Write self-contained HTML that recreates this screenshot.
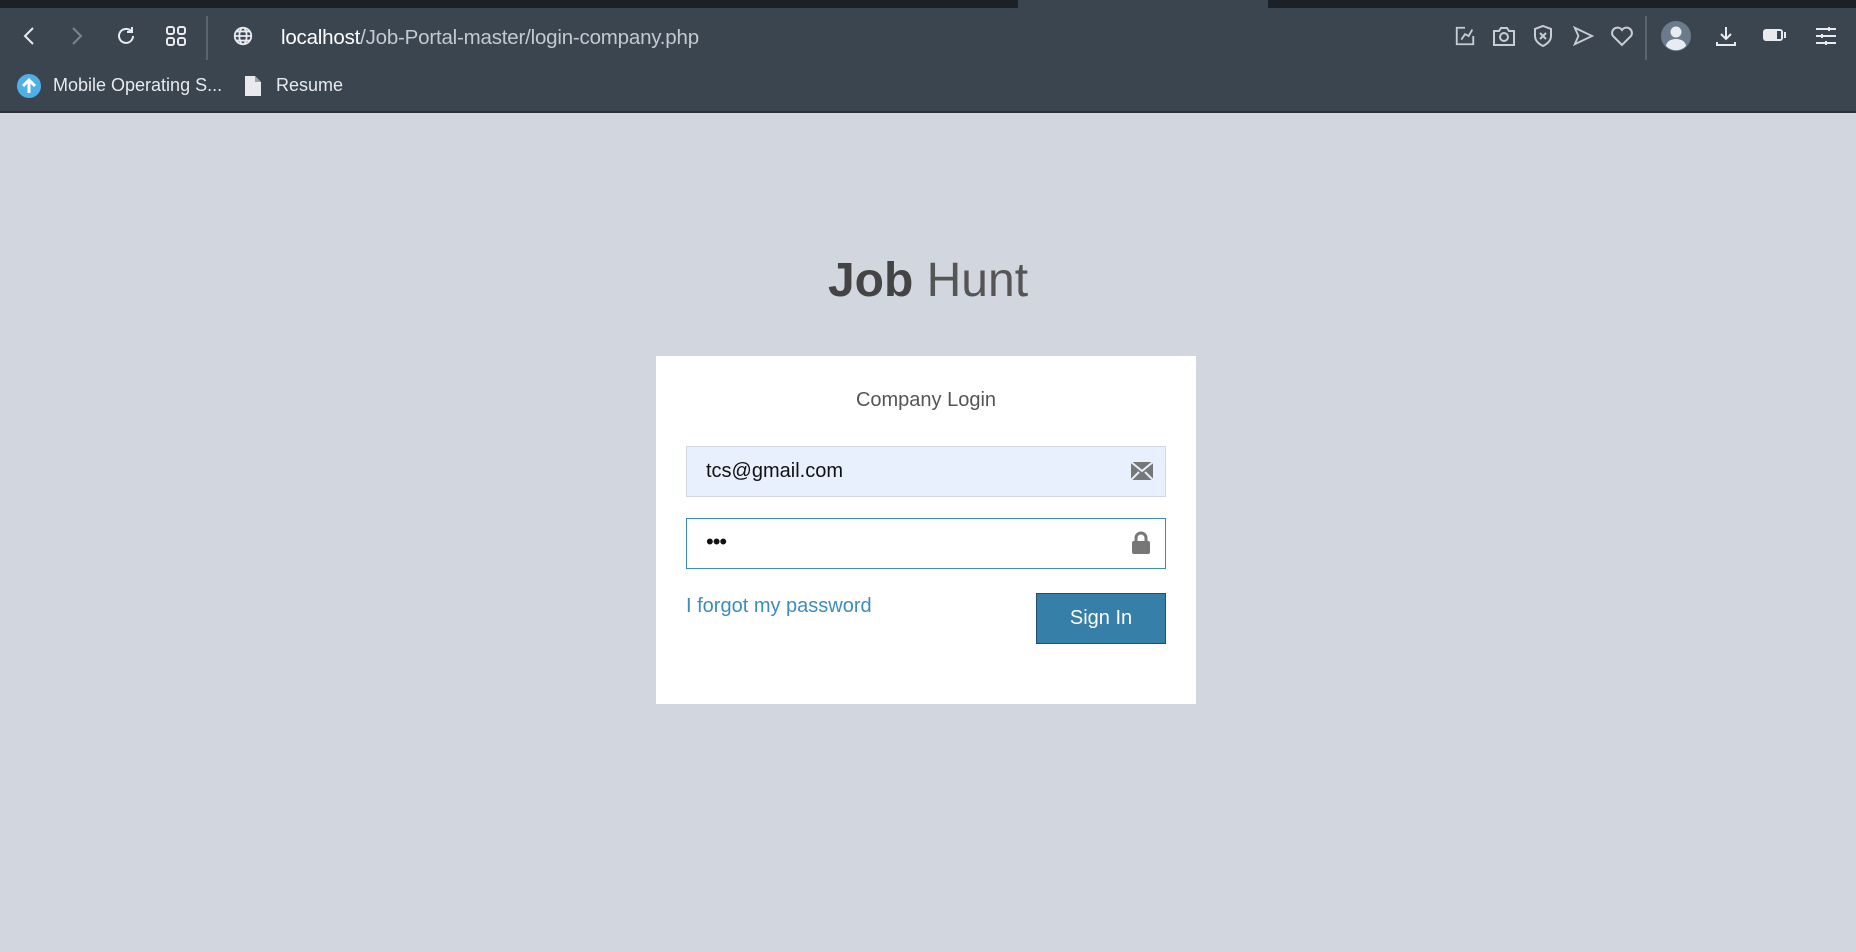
<!DOCTYPE html>
<html><head><meta charset="utf-8"><style>
*{margin:0;padding:0;box-sizing:border-box}
body{width:1856px;height:952px;background:#d2d6de;font-family:"Liberation Sans",sans-serif;position:relative;overflow:hidden}
.top{position:absolute;left:0;top:0;width:1856px;height:8px;background:#1c2127}
.tab{position:absolute;top:0;height:8px;left:1018px;width:250px;background:#3a4550}
.bar{position:absolute;left:0;top:8px;width:1856px;height:105px;background:#3a4550;border-bottom:2px solid #2a3138}
.ic{position:absolute}
.url{position:absolute;left:281px;top:18px;font-size:20.5px;color:#c3c9d0;letter-spacing:-0.2px}
.url b{color:#fff;font-weight:normal}
.bm{position:absolute;top:67px;font-size:18px;color:#e8eaed}
.sep{position:absolute;width:2px;background:#5a646e}
.title{position:absolute;left:0;width:1856px;top:253px;text-align:center;font-size:48px;color:#444}
.card{position:absolute;left:656px;top:356px;width:540px;height:348px;background:#fff}
.h{position:absolute;left:0;width:540px;top:33px;text-align:center;font-size:20px;color:#555}
.in{position:absolute;left:30px;width:480px;height:51px;border:1px solid #d2d6de}
.in span{position:absolute;left:19px;top:13px;font-size:20px;color:#111}
.link{position:absolute;left:30px;top:239px;font-size:20px;color:#3c8dbc}
.btn{position:absolute;left:380px;top:237px;width:130px;height:51px;background:#367fa9;border:1px solid #204d74;color:#fff;font-size:20px;text-align:center;line-height:49px}
</style></head><body>
<div class="top"></div><div class="tab"></div>
<div class="bar">
<svg class="ic" style="left:18px;top:16px" width="24" height="24" viewBox="0 0 24 24" fill="none" stroke="#e8eaed" stroke-width="2"><path d="M15 4l-8 8 8 8"/></svg>
<svg class="ic" style="left:64px;top:16px" width="24" height="24" viewBox="0 0 24 24" fill="none" stroke="#7b858f" stroke-width="2"><path d="M9 4l8 8-8 8"/></svg>
<svg class="ic" style="left:114px;top:16px" width="24" height="24" viewBox="0 0 24 24" fill="none" stroke="#e8eaed" stroke-width="2"><path d="M19 12a7 7 0 1 1-2-5"/><path d="M18 3v5h-5"/></svg>
<svg class="ic" style="left:164px;top:16px" width="24" height="24" viewBox="0 0 24 24" fill="none" stroke="#e8eaed" stroke-width="2"><rect x="3" y="3" width="7" height="7" rx="2"/><rect x="14" y="3" width="7" height="7" rx="2"/><rect x="3" y="14" width="7" height="7" rx="2"/><rect x="14" y="14" width="7" height="7" rx="2"/></svg>
<div class="sep" style="left:206px;top:8px;height:44px"></div>
<svg class="ic" style="left:232px;top:17px" width="22" height="22" viewBox="0 0 24 24" fill="none" stroke="#e8eaed" stroke-width="2"><circle cx="12" cy="12" r="9"/><ellipse cx="12" cy="12" rx="4" ry="9"/><path d="M3 12h18M5 7h14M5 17h14"/></svg>
<div class="url"><b>localhost</b>/Job-Portal-master/login-company.php</div>
<svg class="ic" style="left:1454px;top:17px" width="22" height="22" viewBox="0 0 24 24" fill="none" stroke="#c8cdd3" stroke-width="2"><path d="M12 3H3v18h18v-9"/><path d="M8 16l4-6 4 2 4-7"/></svg>
<svg class="ic" style="left:1492px;top:17px" width="24" height="22" viewBox="0 0 24 22" fill="none" stroke="#c8cdd3" stroke-width="2"><path d="M2 6h5l2-3h6l2 3h5v14H2z"/><circle cx="12" cy="12" r="4"/></svg>
<svg class="ic" style="left:1532px;top:16px" width="22" height="24" viewBox="0 0 22 24" fill="none" stroke="#c8cdd3" stroke-width="2"><path d="M11 2l8 3v7c0 5-4 8-8 10-4-2-8-5-8-10V5z"/><path d="M8 9l6 6M14 9l-6 6"/></svg>
<svg class="ic" style="left:1572px;top:17px" width="22" height="22" viewBox="0 0 24 24" fill="none" stroke="#c8cdd3" stroke-width="2"><path d="M3 3l19 9-19 9 4-9z"/></svg>
<svg class="ic" style="left:1610px;top:17px" width="24" height="22" viewBox="0 0 24 22" fill="none" stroke="#c8cdd3" stroke-width="2"><path d="M12 20L3 11a5 5 0 0 1 9-6 5 5 0 0 1 9 6z"/></svg>
<div class="sep" style="left:1645px;top:8px;height:44px"></div>
<svg class="ic" style="left:1661px;top:13px" width="30" height="30" viewBox="0 0 30 30"><circle cx="15" cy="15" r="15" fill="#6c7b8b"/><circle cx="15" cy="11" r="5.5" fill="#e8ecf0"/><path d="M5 25a10 7 0 0 1 20 0a14 14 0 0 1-20 0z" fill="#e8ecf0"/></svg>
<svg class="ic" style="left:1714px;top:16px" width="24" height="24" viewBox="0 0 24 24" fill="none" stroke="#e8eaed" stroke-width="2"><path d="M12 3v12M7 10l5 5 5-5M3 18v3h18v-3"/></svg>
<svg class="ic" style="left:1762px;top:19px" width="26" height="16" viewBox="0 0 26 16"><rect x="1" y="2" width="20" height="12" rx="3" fill="#e8eaed"/><rect x="15" y="4" width="4" height="8" fill="#3a4550"/><rect x="22" y="5" width="2" height="6" fill="#e8eaed"/></svg>
<svg class="ic" style="left:1814px;top:16px" width="24" height="24" viewBox="0 0 24 24" fill="none" stroke="#e8eaed" stroke-width="2"><path d="M2 5h20M2 12h20M2 19h20M15 3v4M8 10v4M12 17v4"/></svg>
<svg class="ic" style="left:17px;top:66px" width="24" height="24" viewBox="0 0 24 24"><circle cx="12" cy="12" r="12" fill="#4fb0e8"/><path d="M12 19V7M6 12l6-6 6 6" stroke="#fff" stroke-width="3" fill="none"/></svg>
<div class="bm" style="left:53px">Mobile Operating S...</div>
<svg class="ic" style="left:244px;top:67px" width="18" height="22" viewBox="0 0 18 22"><path d="M1 1h10l6 6v14H1z" fill="#e8eaed"/><path d="M11 1v6h6" fill="#9aa2ab"/></svg>
<div class="bm" style="left:276px">Resume</div>
</div>
<div class="title"><b>Job</b> <span style="font-weight:300;color:#555">Hunt</span></div>
<div class="card">
<div class="h">Company Login</div>
<div class="in" style="top:90px;background:#e8f0fe"><span>tcs@gmail.com</span>
<svg style="position:absolute;right:12px;top:15px" width="22" height="18" viewBox="0 0 22 18"><rect x="0" y="0" width="22" height="18" fill="#777"/><path d="M0 0l11 9 11-9M0 18l8-8M22 18l-8-8" stroke="#e8f0fe" stroke-width="2" fill="none"/></svg></div>
<div class="in" style="top:162px;border-color:#3c8dbc;background:#fff"><span style="top:10px;font-size:22px;letter-spacing:-1px">•••</span>
<svg style="position:absolute;right:14px;top:12px" width="20" height="24" viewBox="0 0 20 24"><path d="M5 11V7a5 5 0 0 1 10 0v4" stroke="#777" stroke-width="3" fill="none"/><rect x="1" y="10" width="18" height="13" rx="2" fill="#777"/></svg></div>
<div class="link">I forgot my password</div>
<div class="btn">Sign In</div>
</div>
</body></html>
